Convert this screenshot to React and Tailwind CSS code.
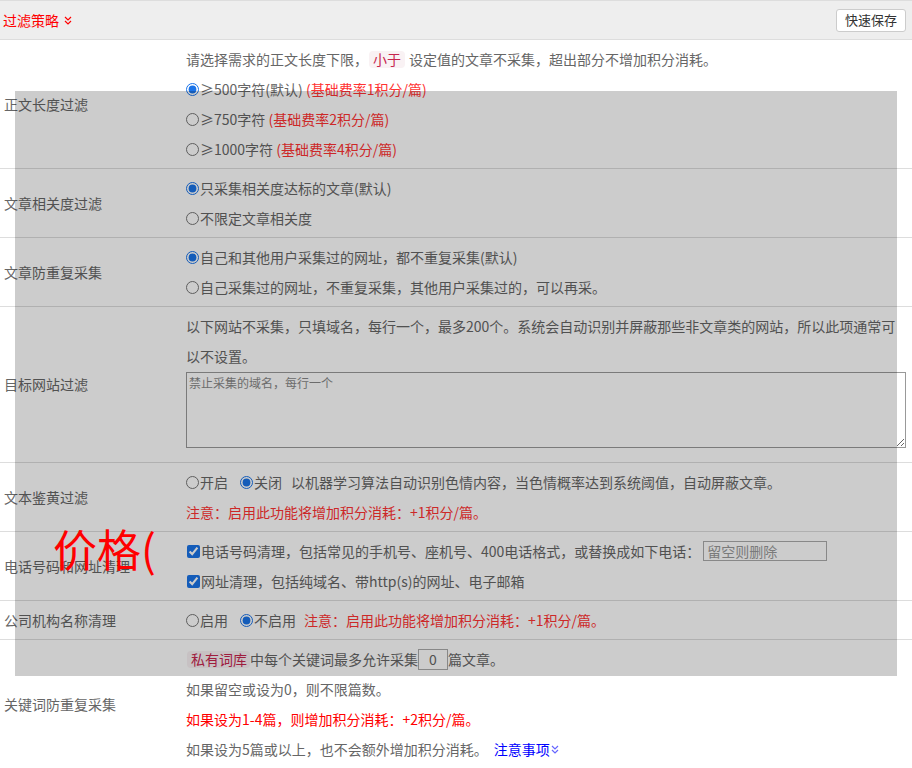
import React from "react";

const font = "font-['Noto_Sans_CJK_SC','Microsoft_YaHei',sans-serif]";

function Chevrons({ color = "#f00", className = "" }) {
  return (
    <svg width="8" height="9" viewBox="0 0 8 9" className={className} fill="none">
      <path d="M1 1 L4 4 L7 1 M1 5 L4 8 L7 5" stroke={color} strokeWidth="1.2" />
    </svg>
  );
}

function Radio({ checked, name }) {
  return (
    <input
      type="radio"
      name={name}
      defaultChecked={checked}
      className="m-0 mr-[1px] w-[13px] h-[13px] accent-[#1a73e8]"
    />
  );
}

function Line({ children, className = "" }) {
  return <div className={"h-[30px] flex items-center whitespace-nowrap " + className}>{children}</div>;
}

function Row({ label, children, bottom = "pb-[4px]" }) {
  return (
    <div className="grid grid-cols-[186px_1fr] border-b border-[#ddd]">
      <div className="flex items-center pl-[4px] text-[14px] text-[#666]">{label}</div>
      <div className={"pt-[4px] pr-[6px] text-[14px] text-[#666] " + bottom}>{children}</div>
    </div>
  );
}

const Tag = ({ children, className = "" }) => (
  <span className={"inline-flex items-center h-[17px] px-[4px] rounded-[4px] bg-[#f9f2f4] text-[#c7254e] text-[14px] " + className}>
    {children}
  </span>
);

export default function App() {
  return (
    <div className={"relative w-[912px] h-[768px] overflow-hidden bg-white " + font}>
      {/* header */}
      <div className="h-[40px] flex items-center justify-between bg-[#eee] border-t border-b border-[#ddd]">
        <div className="flex items-center pl-[3px] text-[14px] text-[#f00]">
          <span>过滤策略</span>
          <Chevrons className="ml-[5px] mt-[1px]" />
        </div>
        <button className="mr-[6px] h-[23px] w-[70px] border border-[#ccc] rounded-[3px] bg-white text-[13px] text-[#333] flex items-center justify-center">
          快速保存
        </button>
      </div>

      <Row label="正文长度过滤">
        <Line>
          请选择需求的正文长度下限，<span className="ml-[1px] mr-[4px]"><Tag>小于</Tag></span>设定值的文章不采集，超出部分不增加积分消耗。
        </Line>
        <Line>
          <Radio name="len" checked />≥500字符(默认)&nbsp;<span className="text-[#f33]">(基础费率1积分/篇)</span>
        </Line>
        <Line>
          <Radio name="len" />≥750字符&nbsp;<span className="text-[#f33]">(基础费率2积分/篇)</span>
        </Line>
        <Line>
          <Radio name="len" />≥1000字符&nbsp;<span className="text-[#f33]">(基础费率4积分/篇)</span>
        </Line>
      </Row>

      <Row label="文章相关度过滤">
        <Line>
          <Radio name="rel" checked />只采集相关度达标的文章(默认)
        </Line>
        <Line>
          <Radio name="rel" />不限定文章相关度
        </Line>
      </Row>

      <Row label="文章防重复采集">
        <Line>
          <Radio name="dup" checked />自己和其他用户采集过的网址，都不重复采集(默认)
        </Line>
        <Line>
          <Radio name="dup" />自己采集过的网址，不重复采集，其他用户采集过的，可以再采。
        </Line>
      </Row>

      <Row label="目标网站过滤" bottom="pb-[14px]">
        <Line>以下网站不采集，只填域名，每行一个，最多200个。系统会自动识别并屏蔽那些非文章类的网站，所以此项通常可</Line>
        <Line>以不设置。</Line>
        <textarea
          placeholder="禁止采集的域名，每行一个"
          className="block mt-[1px] w-[720px] h-[76px] border border-[#999] px-[2px] py-[1px] text-[12px] text-[#333] placeholder:text-[#888] resize"
        />
      </Row>

      <Row label="文本鉴黄过滤">
        <Line>
          <Radio name="porn" />开启
          <span className="ml-[12px]" />
          <Radio name="porn" checked />关闭
          <span className="ml-[9px]">以机器学习算法自动识别色情内容，当色情概率达到系统阈值，自动屏蔽文章。</span>
        </Line>
        <Line className="text-[#f33]">注意：启用此功能将增加积分消耗：+1积分/篇。</Line>
      </Row>

      <Row label="电话号码和网址清理">
        <Line>
          <input type="checkbox" defaultChecked className="m-0 ml-[1px] mr-[1px] w-[13px] h-[13px] accent-[#1a73e8]" />
          电话号码清理，包括常见的手机号、座机号、400电话格式，或替换成如下电话：
          <input
            type="text"
            placeholder="留空则删除"
            className="ml-[3px] w-[124px] h-[20px] border border-[#aaa] px-[3px] text-[14px] placeholder:text-[#999] outline-none"
          />
        </Line>
        <Line>
          <input type="checkbox" defaultChecked className="m-0 ml-[1px] mr-[1px] w-[13px] h-[13px] accent-[#1a73e8]" />
          网址清理，包括纯域名、带http(s)的网址、电子邮箱
        </Line>
      </Row>

      <Row label="公司机构名称清理">
        <Line>
          <Radio name="org" />启用
          <span className="ml-[12px]" />
          <Radio name="org" checked />不启用
          <span className="ml-[8px] text-[#f33]">注意：启用此功能将增加积分消耗：+1积分/篇。</span>
        </Line>
      </Row>

      <Row label="关键词防重复采集">
        <Line>
          <Tag className="ml-[1px] w-[63px] justify-between">
            <span>私</span><span>有</span><span>词</span><span>库</span>
          </Tag>
          中每个关键词最多允许采集
          <input
            type="text"
            defaultValue="0"
            className="w-[30px] h-[21px] border border-[#aaa] text-center text-[14px] text-[#666] outline-none"
          />
          篇文章。
        </Line>
        <Line>如果留空或设为0，则不限篇数。</Line>
        <Line className="text-[#f00]">如果设为1-4篇，则增加积分消耗：+2积分/篇。</Line>
        <Line>
          如果设为5篇或以上，也不会额外增加积分消耗。
          <span className="ml-[6px] text-[#00f] flex items-center">
            注意事项
            <Chevrons color="#66f" className="ml-[1px] mt-[1px]" />
          </span>
        </Line>
      </Row>

      {/* modal mask */}
      <div className="absolute left-[15px] top-[91px] w-[882px] h-[585px] bg-[rgba(0,0,0,0.2)]" />
      <div className="absolute left-[53px] top-[518px] text-[44px] leading-[60px] text-[#f00]">价格(</div>
    </div>
  );
}
